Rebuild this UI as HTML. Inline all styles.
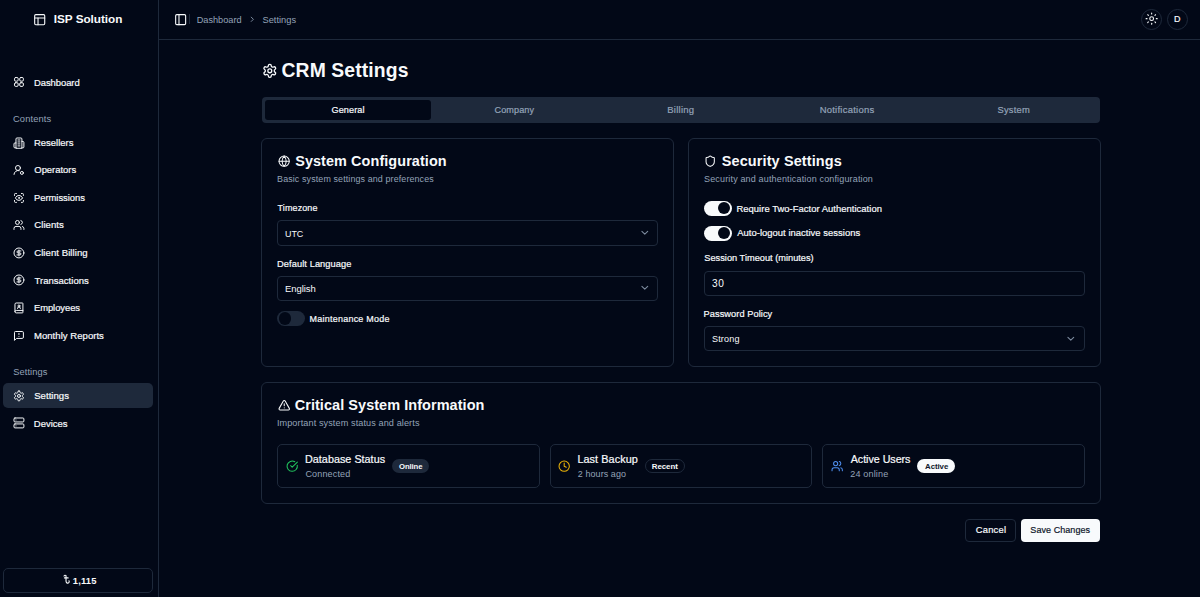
<!DOCTYPE html>
<html><head><meta charset="utf-8"><style>
html,body{margin:0;padding:0;width:1200px;height:597px;overflow:hidden;background:#020817;}
body{position:relative;font-family:"Liberation Sans",sans-serif;}
.bx{position:absolute;box-sizing:border-box;}
.ic{position:absolute;overflow:visible;}
.tx{position:absolute;white-space:nowrap;line-height:1;}
</style></head><body>
<div class="bx" style="left:158px;top:0px;width:1px;height:597px;background:#1e293b"></div>
<div class="bx" style="left:159px;top:39px;width:1041px;height:1px;background:#1e293b"></div>
<div class="bx" style="left:3px;top:383px;width:150px;height:25px;background:#1e293b;border-radius:5px"></div>
<div class="bx" style="left:3px;top:568px;width:150px;height:25px;border:1px solid #1e293b;border-radius:5px"></div>
<div class="bx" style="left:189px;top:14px;width:1px;height:10px;background:#1e293b"></div>
<div class="bx" style="left:1141px;top:9px;width:21px;height:21px;border:1px solid #1e293b;border-radius:50%"></div>
<div class="bx" style="left:1167px;top:9px;width:21px;height:21px;border:1px solid #1e293b;border-radius:50%"></div>
<div class="bx" style="left:262px;top:97px;width:838px;height:26px;background:#1e293b;border-radius:4px"></div>
<div class="bx" style="left:265px;top:100px;width:166px;height:20px;background:#020817;border-radius:3px"></div>
<div class="bx" style="left:261px;top:138px;width:413px;height:229px;border:1px solid #1e293b;border-radius:6px"></div>
<div class="bx" style="left:688px;top:138px;width:413px;height:229px;border:1px solid #1e293b;border-radius:6px"></div>
<div class="bx" style="left:261px;top:382px;width:840px;height:122px;border:1px solid #1e293b;border-radius:6px"></div>
<div class="bx" style="left:277px;top:220px;width:381px;height:26px;border:1px solid #1e293b;border-radius:4px"></div>
<div class="bx" style="left:277px;top:276px;width:381px;height:25px;border:1px solid #1e293b;border-radius:4px"></div>
<div class="bx" style="left:704px;top:271px;width:381px;height:25px;border:1px solid #1e293b;border-radius:4px"></div>
<div class="bx" style="left:704px;top:326px;width:381px;height:25px;border:1px solid #1e293b;border-radius:4px"></div>
<div class="bx" style="left:277.4px;top:311.0px;width:27.6px;height:15.2px;border-radius:8px;background:#1e293b"></div><div class="bx" style="left:278.70px;top:312.30px;width:12.6px;height:12.6px;border-radius:50%;background:#020817"></div>
<div class="bx" style="left:704.2px;top:200.6px;width:27.6px;height:15.2px;border-radius:8px;background:#f8fafc"></div><div class="bx" style="left:717.90px;top:201.90px;width:12.6px;height:12.6px;border-radius:50%;background:#020817"></div>
<div class="bx" style="left:704.2px;top:225.6px;width:27.6px;height:15.2px;border-radius:8px;background:#f8fafc"></div><div class="bx" style="left:717.90px;top:226.90px;width:12.6px;height:12.6px;border-radius:50%;background:#020817"></div>
<div class="bx" style="left:277px;top:444px;width:263px;height:44px;border:1px solid #1e293b;border-radius:5px"></div>
<div class="bx" style="left:550px;top:444px;width:262px;height:44px;border:1px solid #1e293b;border-radius:5px"></div>
<div class="bx" style="left:822px;top:444px;width:263px;height:44px;border:1px solid #1e293b;border-radius:5px"></div>
<div class="bx" style="left:392px;top:459px;width:37px;height:14px;background:#1e293b;border-radius:7px"></div>
<div class="bx" style="left:645px;top:459px;width:40px;height:14px;border:1px solid #1e293b;border-radius:7px"></div>
<div class="bx" style="left:917px;top:459px;width:38px;height:14px;background:#f8fafc;border-radius:7px"></div>
<div class="bx" style="left:965px;top:519px;width:51px;height:23px;border:1px solid #1e293b;border-radius:4px;background:#020817"></div>
<div class="bx" style="left:1021px;top:519px;width:79px;height:23px;background:#f8fafc;border-radius:4px"></div>
<svg class="ic" style="left:33.30px;top:12.55px;width:13.40px;height:13.40px" viewBox="0 0 24 24" fill="none" stroke="#f8fafc" stroke-width="2" stroke-linecap="round" stroke-linejoin="round"><rect width="18" height="18" x="3" y="3" rx="2"/><path d="M3 9h18"/><path d="M9 21V9"/></svg>
<svg class="ic" style="left:13.05px;top:76.05px;width:11.90px;height:11.90px" viewBox="0 0 24 24" fill="none" stroke="#f8fafc" stroke-width="2" stroke-linecap="round" stroke-linejoin="round"><rect width="7.5" height="7.5" x="3" y="3" rx="2.6"/><rect width="7.5" height="7.5" x="13.5" y="3" rx="2.6"/><rect width="7.5" height="7.5" x="13.5" y="13.5" rx="2.6"/><rect width="7.5" height="7.5" x="3" y="13.5" rx="2.6"/></svg>
<svg class="ic" style="left:13.05px;top:136.55px;width:11.90px;height:11.90px" viewBox="0 0 24 24" fill="none" stroke="#f8fafc" stroke-width="2" stroke-linecap="round" stroke-linejoin="round"><path d="M6 22V4a2 2 0 0 1 2-2h8a2 2 0 0 1 2 2v18Z"/><path d="M6 12H4a2 2 0 0 0-2 2v6a2 2 0 0 0 2 2h2"/><path d="M18 9h2a2 2 0 0 1 2 2v9a2 2 0 0 1-2 2h-2"/><path d="M10 6h4"/><path d="M10 10h4"/><path d="M10 14h4"/><path d="M10 18h4"/></svg>
<svg class="ic" style="left:13.05px;top:164.05px;width:11.90px;height:11.90px" viewBox="0 0 24 24" fill="none" stroke="#f8fafc" stroke-width="2" stroke-linecap="round" stroke-linejoin="round"><circle cx="10" cy="8" r="5"/><path d="M2 21a8 8 0 0 1 10.43-7.62"/><circle cx="18" cy="18" r="3"/></svg>
<svg class="ic" style="left:13.05px;top:191.55px;width:11.90px;height:11.90px" viewBox="0 0 24 24" fill="none" stroke="#f8fafc" stroke-width="2" stroke-linecap="round" stroke-linejoin="round"><path d="M3 7V5a2 2 0 0 1 2-2h2"/><path d="M17 3h2a2 2 0 0 1 2 2v2"/><path d="M21 17v2a2 2 0 0 1-2 2h-2"/><path d="M7 21H5a2 2 0 0 1-2-2v-2"/><circle cx="12" cy="12" r="1"/><path d="M18.944 12.33a1 1 0 0 0 0-.66 7.5 7.5 0 0 0-13.888 0 1 1 0 0 0 0 .66 7.5 7.5 0 0 0 13.888 0"/></svg>
<svg class="ic" style="left:13.05px;top:219.05px;width:11.90px;height:11.90px" viewBox="0 0 24 24" fill="none" stroke="#f8fafc" stroke-width="2" stroke-linecap="round" stroke-linejoin="round"><path d="M16 21v-2a4 4 0 0 0-4-4H6a4 4 0 0 0-4 4v2"/><circle cx="9" cy="7" r="4"/><path d="M22 21v-2a4 4 0 0 0-3-3.87"/><path d="M16 3.13a4 4 0 0 1 0 7.75"/></svg>
<svg class="ic" style="left:13.05px;top:246.65px;width:11.90px;height:11.90px" viewBox="0 0 24 24" fill="none" stroke="#f8fafc" stroke-width="2" stroke-linecap="round" stroke-linejoin="round"><circle cx="12" cy="12" r="10"/><path d="M16 8h-6a2 2 0 1 0 0 4h4a2 2 0 1 1 0 4H8"/><path d="M12 18V6"/></svg>
<svg class="ic" style="left:13.05px;top:274.05px;width:11.90px;height:11.90px" viewBox="0 0 24 24" fill="none" stroke="#f8fafc" stroke-width="2" stroke-linecap="round" stroke-linejoin="round"><circle cx="12" cy="12" r="10"/><path d="M16 8h-6a2 2 0 1 0 0 4h4a2 2 0 1 1 0 4H8"/><path d="M12 18V6"/></svg>
<svg class="ic" style="left:13.05px;top:301.55px;width:11.90px;height:11.90px" viewBox="0 0 24 24" fill="none" stroke="#f8fafc" stroke-width="2" stroke-linecap="round" stroke-linejoin="round"><path d="M15 13a3 3 0 1 0-6 0"/><path d="M4 19.5v-15A2.5 2.5 0 0 1 6.5 2H19a1 1 0 0 1 1 1v18a1 1 0 0 1-1 1H6.5a1 1 0 0 1 0-5H20"/><circle cx="12" cy="8" r="2"/></svg>
<svg class="ic" style="left:13.05px;top:329.55px;width:11.90px;height:11.90px" viewBox="0 0 24 24" fill="none" stroke="#f8fafc" stroke-width="2" stroke-linecap="round" stroke-linejoin="round"><path d="M21 15a2 2 0 0 1-2 2H7l-4 4V5a2 2 0 0 1 2-2h14a2 2 0 0 1 2 2z"/><path d="M12 7v2"/><path d="M12 13h.01"/></svg>
<svg class="ic" style="left:13.05px;top:389.65px;width:11.90px;height:11.90px" viewBox="0 0 24 24" fill="none" stroke="#f8fafc" stroke-width="2" stroke-linecap="round" stroke-linejoin="round"><path d="M12.22 2h-.44a2 2 0 0 0-2 2v.18a2 2 0 0 1-1 1.73l-.43.25a2 2 0 0 1-2 0l-.15-.08a2 2 0 0 0-2.73.73l-.22.38a2 2 0 0 0 .73 2.73l.15.1a2 2 0 0 1 1 1.72v.51a2 2 0 0 1-1 1.74l-.15.09a2 2 0 0 0-.73 2.73l.22.38a2 2 0 0 0 2.73.73l.15-.08a2 2 0 0 1 2 0l.43.25a2 2 0 0 1 1 1.73V20a2 2 0 0 0 2 2h.44a2 2 0 0 0 2-2v-.18a2 2 0 0 1 1-1.73l.43-.25a2 2 0 0 1 2 0l.15.08a2 2 0 0 0 2.73-.73l.22-.39a2 2 0 0 0-.73-2.73l-.15-.08a2 2 0 0 1-1-1.74v-.5a2 2 0 0 1 1-1.74l.15-.09a2 2 0 0 0 .73-2.73l-.22-.38a2 2 0 0 0-2.73-.73l-.15.08a2 2 0 0 1-2 0l-.43-.25a2 2 0 0 1-1-1.73V4a2 2 0 0 0-2-2z"/><circle cx="12" cy="12" r="3"/></svg>
<svg class="ic" style="left:13.05px;top:417.35px;width:11.90px;height:11.90px" viewBox="0 0 24 24" fill="none" stroke="#f8fafc" stroke-width="2" stroke-linecap="round" stroke-linejoin="round"><rect width="20" height="8" x="2" y="2" rx="2" ry="2"/><rect width="20" height="8" x="2" y="14" rx="2" ry="2"/><line x1="6" x2="6.01" y1="6" y2="6"/><line x1="6" x2="6.01" y1="18" y2="18"/></svg>
<svg class="ic" style="left:173.60px;top:12.70px;width:13.30px;height:13.30px" viewBox="0 0 24 24" fill="none" stroke="#f8fafc" stroke-width="2" stroke-linecap="round" stroke-linejoin="round"><rect width="18" height="18" x="3" y="3" rx="2"/><path d="M9 3v18"/></svg>
<svg class="ic" style="left:248.10px;top:15.00px;width:8.60px;height:8.60px" viewBox="0 0 24 24" fill="none" stroke="#94a3b8" stroke-width="2.3" stroke-linecap="round" stroke-linejoin="round"><path d="m9 18 6-6-6-6"/></svg>
<svg class="ic" style="left:1144.75px;top:12.25px;width:13.30px;height:13.30px" viewBox="0 0 24 24" fill="none" stroke="#f8fafc" stroke-width="2" stroke-linecap="round" stroke-linejoin="round"><circle cx="12" cy="12" r="3.4"/><path d="M12 2v1.6"/><path d="M12 20.4v1.6"/><path d="m4.93 4.93 1.1 1.1"/><path d="m17.97 17.97 1.1 1.1"/><path d="M2 12h1.6"/><path d="M20.4 12h1.6"/><path d="m6.03 17.97-1.1 1.1"/><path d="m19.07 4.93-1.1 1.1"/></svg>
<svg class="ic" style="left:261.70px;top:63.05px;width:15.60px;height:15.60px" viewBox="0 0 24 24" fill="none" stroke="#f8fafc" stroke-width="2" stroke-linecap="round" stroke-linejoin="round"><path d="M12.22 2h-.44a2 2 0 0 0-2 2v.18a2 2 0 0 1-1 1.73l-.43.25a2 2 0 0 1-2 0l-.15-.08a2 2 0 0 0-2.73.73l-.22.38a2 2 0 0 0 .73 2.73l.15.1a2 2 0 0 1 1 1.72v.51a2 2 0 0 1-1 1.74l-.15.09a2 2 0 0 0-.73 2.73l.22.38a2 2 0 0 0 2.73.73l.15-.08a2 2 0 0 1 2 0l.43.25a2 2 0 0 1 1 1.73V20a2 2 0 0 0 2 2h.44a2 2 0 0 0 2-2v-.18a2 2 0 0 1 1-1.73l.43-.25a2 2 0 0 1 2 0l.15.08a2 2 0 0 0 2.73-.73l.22-.39a2 2 0 0 0-.73-2.73l-.15-.08a2 2 0 0 1-1-1.74v-.5a2 2 0 0 1 1-1.74l.15-.09a2 2 0 0 0 .73-2.73l-.22-.38a2 2 0 0 0-2.73-.73l-.15.08a2 2 0 0 1-2 0l-.43-.25a2 2 0 0 1-1-1.73V4a2 2 0 0 0-2-2z"/><circle cx="12" cy="12" r="3"/></svg>
<svg class="ic" style="left:277.55px;top:155.25px;width:12.30px;height:12.30px" viewBox="0 0 24 24" fill="none" stroke="#f8fafc" stroke-width="2" stroke-linecap="round" stroke-linejoin="round"><circle cx="12" cy="12" r="10"/><path d="M12 2a14.5 14.5 0 0 0 0 20 14.5 14.5 0 0 0 0-20"/><path d="M2 12h20"/></svg>
<svg class="ic" style="left:704.15px;top:155.40px;width:12.40px;height:12.40px" viewBox="0 0 24 24" fill="none" stroke="#f8fafc" stroke-width="2" stroke-linecap="round" stroke-linejoin="round"><path d="M20 13c0 5-3.5 7.5-7.66 8.95a1 1 0 0 1-.67-.01C7.5 20.5 4 18 4 13V6a1 1 0 0 1 1-1c2 0 4.5-1.2 6.24-2.72a1.17 1.17 0 0 1 1.52 0C14.51 3.81 17 5 19 5a1 1 0 0 1 1 1z"/></svg>
<svg class="ic" style="left:277.65px;top:399.05px;width:12.50px;height:12.50px" viewBox="0 0 24 24" fill="none" stroke="#f8fafc" stroke-width="2" stroke-linecap="round" stroke-linejoin="round"><path d="m21.73 18-8-14a2 2 0 0 0-3.48 0l-8 14A2 2 0 0 0 4 21h16a2 2 0 0 0 1.73-3"/><path d="M12 9v4"/><path d="M12 17h.01"/></svg>
<svg class="ic" style="left:285.50px;top:459.60px;width:12.40px;height:12.40px" viewBox="0 0 24 24" fill="none" stroke="#22c55e" stroke-width="2" stroke-linecap="round" stroke-linejoin="round"><path d="M21.801 10A10 10 0 1 1 17 3.335"/><path d="m9 11 3 3L22 4"/></svg>
<svg class="ic" style="left:557.90px;top:459.70px;width:12.40px;height:12.40px" viewBox="0 0 24 24" fill="none" stroke="#eab308" stroke-width="2" stroke-linecap="round" stroke-linejoin="round"><circle cx="12" cy="12" r="10"/><polyline points="12 6 12 12 16 14"/></svg>
<svg class="ic" style="left:831.00px;top:459.60px;width:12.40px;height:12.40px" viewBox="0 0 24 24" fill="none" stroke="#4f8ff0" stroke-width="2" stroke-linecap="round" stroke-linejoin="round"><path d="M16 21v-2a4 4 0 0 0-4-4H6a4 4 0 0 0-4 4v2"/><circle cx="9" cy="7" r="4"/><path d="M22 21v-2a4 4 0 0 0-3-3.87"/><path d="M16 3.13a4 4 0 0 1 0 7.75"/></svg>
<svg class="ic" style="left:638.60px;top:227.00px;width:11.60px;height:11.60px;opacity:.85" viewBox="0 0 24 24" fill="none" stroke="#94a3b8" stroke-width="2.2" stroke-linecap="round" stroke-linejoin="round"><path d="m6 9 6 6 6-6"/></svg>
<svg class="ic" style="left:638.60px;top:282.40px;width:11.60px;height:11.60px;opacity:.85" viewBox="0 0 24 24" fill="none" stroke="#94a3b8" stroke-width="2.2" stroke-linecap="round" stroke-linejoin="round"><path d="m6 9 6 6 6-6"/></svg>
<svg class="ic" style="left:1065.45px;top:332.85px;width:11.60px;height:11.60px;opacity:.85" viewBox="0 0 24 24" fill="none" stroke="#94a3b8" stroke-width="2.2" stroke-linecap="round" stroke-linejoin="round"><path d="m6 9 6 6 6-6"/></svg>
<svg class="ic" style="left:62.3px;top:574.3px;width:8.6px;height:10.2px" viewBox="0 0 9 11" fill="none" stroke="#f8fafc" stroke-width="1.2" stroke-linecap="round"><path d="M2 2.2c.3-1 1.6-1.2 2.2-.4V7.6c0 1.6 1.2 2.6 2.4 2.1 1-.4 1.3-1.5.8-2.4"/><path d="M2.5 4.2h4"/></svg>
<span class="tx" id="t0" style="left:53.79px;top:13.00px;font-size:11.79px;font-weight:bold;letter-spacing:-0.046px;color:#f8fafc">ISP Solution</span>
<span class="tx" id="t1" style="left:33.95px;top:77.51px;font-size:9.43px;font-weight:normal;letter-spacing:-0.044px;color:#f8fafc;-webkit-text-stroke:0.20px #f8fafc">Dashboard</span>
<span class="tx" id="t2" style="left:12.93px;top:114.61px;font-size:9.33px;font-weight:normal;letter-spacing:0.143px;color:#94a3b8">Contents</span>
<span class="tx" id="t3" style="left:33.94px;top:137.71px;font-size:9.49px;font-weight:normal;letter-spacing:-0.001px;color:#f8fafc;-webkit-text-stroke:0.20px #f8fafc">Resellers</span>
<span class="tx" id="t4" style="left:34.32px;top:165.31px;font-size:9.46px;font-weight:normal;letter-spacing:-0.025px;color:#f8fafc;-webkit-text-stroke:0.20px #f8fafc">Operators</span>
<span class="tx" id="t5" style="left:33.94px;top:193.01px;font-size:9.44px;font-weight:normal;letter-spacing:-0.027px;color:#f8fafc;-webkit-text-stroke:0.20px #f8fafc">Permissions</span>
<span class="tx" id="t6" style="left:34.22px;top:220.21px;font-size:9.6px;font-weight:normal;letter-spacing:0.054px;color:#f8fafc;-webkit-text-stroke:0.20px #f8fafc">Clients</span>
<span class="tx" id="t7" style="left:34.22px;top:248.10px;font-size:9.6px;font-weight:normal;letter-spacing:0.046px;color:#f8fafc;-webkit-text-stroke:0.20px #f8fafc">Client Billing</span>
<span class="tx" id="t8" style="left:34.51px;top:275.50px;font-size:9.52px;font-weight:normal;letter-spacing:0.012px;color:#f8fafc;-webkit-text-stroke:0.20px #f8fafc">Transactions</span>
<span class="tx" id="t9" style="left:33.95px;top:302.71px;font-size:9.41px;font-weight:normal;letter-spacing:-0.052px;color:#f8fafc;-webkit-text-stroke:0.20px #f8fafc">Employees</span>
<span class="tx" id="t10" style="left:33.94px;top:331.10px;font-size:9.56px;font-weight:normal;letter-spacing:0.032px;color:#f8fafc;-webkit-text-stroke:0.20px #f8fafc">Monthly Reports</span>
<span class="tx" id="t11" style="left:13.13px;top:368.30px;font-size:9.29px;font-weight:normal;letter-spacing:0.112px;color:#94a3b8">Settings</span>
<span class="tx" id="t12" style="left:34.22px;top:391.01px;font-size:9.56px;font-weight:normal;letter-spacing:0.032px;color:#f8fafc;-webkit-text-stroke:0.20px #f8fafc">Settings</span>
<span class="tx" id="t13" style="left:33.84px;top:418.50px;font-size:9.49px;font-weight:normal;letter-spacing:-0.001px;color:#f8fafc;-webkit-text-stroke:0.20px #f8fafc">Devices</span>
<span class="tx" id="t14" style="left:72.74px;top:575.71px;font-size:9.39px;font-weight:bold;letter-spacing:0.182px;color:#f8fafc">1,115</span>
<span class="tx" id="t15" style="left:196.66px;top:15.51px;font-size:9.2px;font-weight:normal;letter-spacing:-0.007px;color:#94a3b8">Dashboard</span>
<span class="tx" id="t16" style="left:262.43px;top:15.50px;font-size:9.28px;font-weight:normal;letter-spacing:0.031px;color:#94a3b8">Settings</span>
<span class="tx" id="t17" style="left:1173.98px;top:15.40px;font-size:8.94px;font-weight:normal;letter-spacing:0.336px;color:#f8fafc;-webkit-text-stroke:0.20px #f8fafc">D</span>
<span class="tx" id="t18" style="left:281.53px;top:61.00px;font-size:19.33px;font-weight:bold;letter-spacing:0.112px;color:#f8fafc">CRM Settings</span>
<span class="tx" id="t19" style="left:331.54px;top:106.40px;font-size:9.11px;font-weight:normal;letter-spacing:0.102px;color:#f8fafc;-webkit-text-stroke:0.20px #f8fafc">General</span>
<span class="tx" id="t20" style="left:494.55px;top:106.41px;font-size:9.08px;font-weight:normal;letter-spacing:0.099px;color:#94a3b8;-webkit-text-stroke:0.20px #94a3b8">Company</span>
<span class="tx" id="t21" style="left:667.24px;top:105.40px;font-size:9.52px;font-weight:normal;letter-spacing:0.250px;color:#94a3b8;-webkit-text-stroke:0.20px #94a3b8">Billing</span>
<span class="tx" id="t22" style="left:819.64px;top:105.41px;font-size:9.49px;font-weight:normal;letter-spacing:0.246px;color:#94a3b8;-webkit-text-stroke:0.20px #94a3b8">Notifications</span>
<span class="tx" id="t23" style="left:997.43px;top:106.40px;font-size:9.34px;font-weight:normal;letter-spacing:0.265px;color:#94a3b8;-webkit-text-stroke:0.20px #94a3b8">System</span>
<span class="tx" id="t24" style="left:295.21px;top:153.71px;font-size:14.41px;font-weight:bold;letter-spacing:0.092px;color:#f8fafc">System Configuration</span>
<span class="tx" id="t25" style="left:277.09px;top:175.21px;font-size:8.91px;font-weight:normal;letter-spacing:0.115px;color:#94a3b8">Basic system settings and preferences</span>
<span class="tx" id="t26" style="left:277.62px;top:204.40px;font-size:8.98px;font-weight:normal;letter-spacing:0.116px;color:#f8fafc;-webkit-text-stroke:0.20px #f8fafc">Timezone</span>
<span class="tx" id="t27" style="left:285.07px;top:229.51px;font-size:8.94px;font-weight:normal;letter-spacing:-0.130px;color:#f8fafc">UTC</span>
<span class="tx" id="t28" style="left:277.06px;top:259.81px;font-size:9.26px;font-weight:normal;letter-spacing:0.091px;color:#f8fafc;-webkit-text-stroke:0.20px #f8fafc">Default Language</span>
<span class="tx" id="t29" style="left:284.94px;top:283.71px;font-size:9.46px;font-weight:normal;letter-spacing:-0.023px;color:#f8fafc">English</span>
<span class="tx" id="t30" style="left:309.58px;top:314.60px;font-size:8.96px;font-weight:normal;letter-spacing:0.249px;color:#f8fafc;-webkit-text-stroke:0.20px #f8fafc">Maintenance Mode</span>
<span class="tx" id="t31" style="left:721.71px;top:153.71px;font-size:14.48px;font-weight:bold;letter-spacing:0.120px;color:#f8fafc">Security Settings</span>
<span class="tx" id="t32" style="left:704.04px;top:175.21px;font-size:9.0px;font-weight:normal;letter-spacing:0.156px;color:#94a3b8">Security and authentication configuration</span>
<span class="tx" id="t33" style="left:736.45px;top:203.71px;font-size:9.43px;font-weight:normal;letter-spacing:0.034px;color:#f8fafc;-webkit-text-stroke:0.20px #f8fafc">Require Two-Factor Authentication</span>
<span class="tx" id="t34" style="left:737.20px;top:228.31px;font-size:9.43px;font-weight:normal;letter-spacing:0.034px;color:#f8fafc;-webkit-text-stroke:0.20px #f8fafc">Auto-logout inactive sessions</span>
<span class="tx" id="t35" style="left:704.33px;top:254.30px;font-size:9.23px;font-weight:normal;letter-spacing:0.009px;color:#f8fafc;-webkit-text-stroke:0.20px #f8fafc">Session Timeout (minutes)</span>
<span class="tx" id="t36" style="left:712.00px;top:278.91px;font-size:10.15px;font-weight:normal;letter-spacing:0.682px;color:#f8fafc">30</span>
<span class="tx" id="t37" style="left:703.56px;top:309.71px;font-size:9.22px;font-weight:normal;letter-spacing:0.071px;color:#f8fafc;-webkit-text-stroke:0.20px #f8fafc">Password Policy</span>
<span class="tx" id="t38" style="left:711.94px;top:334.91px;font-size:9.08px;font-weight:normal;letter-spacing:0.164px;color:#f8fafc">Strong</span>
<span class="tx" id="t39" style="left:294.72px;top:397.81px;font-size:14.49px;font-weight:bold;letter-spacing:0.052px;color:#f8fafc">Critical System Information</span>
<span class="tx" id="t40" style="left:276.88px;top:418.71px;font-size:9.14px;font-weight:normal;letter-spacing:0.094px;color:#94a3b8">Important system status and alerts</span>
<span class="tx" id="t41" style="left:305.04px;top:454.01px;font-size:10.79px;font-weight:normal;letter-spacing:0.022px;color:#f8fafc;-webkit-text-stroke:0.20px #f8fafc">Database Status</span>
<span class="tx" id="t42" style="left:305.45px;top:469.81px;font-size:9.04px;font-weight:normal;letter-spacing:0.142px;color:#94a3b8">Connected</span>
<span class="tx" id="t43" style="left:399.09px;top:462.80px;font-size:7.74px;font-weight:bold;letter-spacing:-0.134px;color:#f8fafc">Online</span>
<span class="tx" id="t44" style="left:577.43px;top:454.01px;font-size:10.86px;font-weight:normal;letter-spacing:0.059px;color:#f8fafc;-webkit-text-stroke:0.20px #f8fafc">Last Backup</span>
<span class="tx" id="t45" style="left:577.85px;top:469.80px;font-size:8.96px;font-weight:normal;letter-spacing:0.085px;color:#94a3b8">2 hours ago</span>
<span class="tx" id="t46" style="left:651.73px;top:462.81px;font-size:7.91px;font-weight:bold;letter-spacing:-0.035px;color:#f8fafc">Recent</span>
<span class="tx" id="t47" style="left:850.70px;top:454.01px;font-size:10.71px;font-weight:normal;letter-spacing:-0.026px;color:#f8fafc;-webkit-text-stroke:0.20px #f8fafc">Active Users</span>
<span class="tx" id="t48" style="left:850.25px;top:469.80px;font-size:9.09px;font-weight:normal;letter-spacing:0.148px;color:#94a3b8">24 online</span>
<span class="tx" id="t49" style="left:925.04px;top:462.81px;font-size:7.85px;font-weight:bold;letter-spacing:-0.060px;color:#0f172a">Active</span>
<span class="tx" id="t50" style="left:975.73px;top:526.31px;font-size:9.33px;font-weight:normal;letter-spacing:0.241px;color:#f8fafc;-webkit-text-stroke:0.20px #f8fafc">Cancel</span>
<span class="tx" id="t51" style="left:1030.34px;top:526.30px;font-size:9.02px;font-weight:normal;letter-spacing:0.051px;color:#0f172a;-webkit-text-stroke:0.20px #0f172a">Save Changes</span>
</body></html>
